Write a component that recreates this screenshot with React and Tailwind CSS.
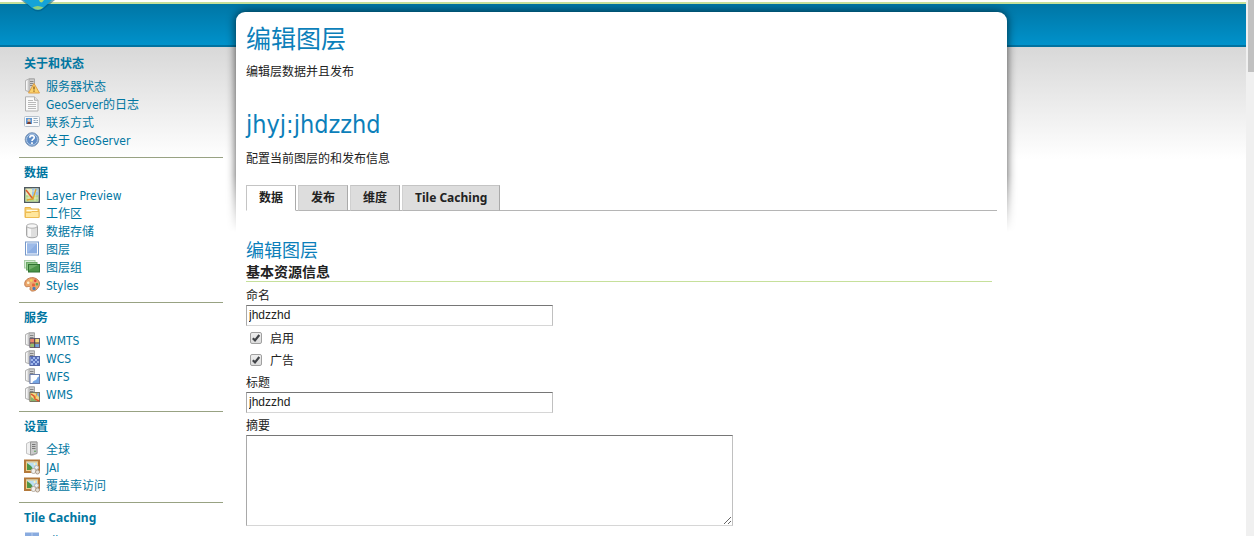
import React from "react";

const svgProps = {
  width: 16,
  height: 16,
  viewBox: "0 0 16 16",
  className: "shrink-0",
  "aria-hidden": true,
};

function Tower() {
  return (
    <>
      <path d="M1.500 2.500 5 .8h5.500v12L7 14.500 1.500 12.500z" fill="#e4e4e4" stroke="#b3b3b3" />
      <path d="M5 1h5.500v12.500L5 14z" fill="#cfcfcf" stroke="#9e9e9e" strokeWidth=".8" />
      <path d="M6 3.500h3.500M6 5.500h3.500M6 7.500h3.500" stroke="#858585" />
      <path d="M2.500 3v9" stroke="#f7f7f7" />
    </>
  );
}

const icons = {
  status: (
    <svg {...svgProps}>
      <Tower />
      <path d="M10 5.500 15.500 15h-11z" fill="#fbd26b" stroke="#e0a045" strokeLinejoin="round" />
      <path d="M10 8.500v3M10 12.500v1.300" stroke="#8a5a1a" strokeWidth="1.300" />
    </svg>
  ),
  log: (
    <svg {...svgProps}>
      <path d="M1.500.8h9L14 4.300V15H1.500z" fill="#fafafa" stroke="#b1b1b1" />
      <path d="M10.500.8v3.500H14" fill="#e4e4e4" stroke="#b1b1b1" />
      <path d="M4 4.500h5M4 6.500h8M4 8.500h8M4 10.500h8M4 12.500h8" stroke="#b9b9b9" />
    </svg>
  ),
  contact: (
    <svg {...svgProps}>
      <rect x=".5" y="2.500" width="15" height="10" rx="1" fill="#f7f9fb" stroke="#b6c1cc" />
      <rect x="2" y="4" width="6" height="6" fill="#5a96d5" />
      <circle cx="5" cy="6.300" r="1.500" fill="#efc29b" />
      <path d="M3 10c0-3 4-3 4 0z" fill="#7b3c2c" />
      <path d="M9.500 4.500h4M9.500 6.500h2M12.500 6.500h1.500M9.500 8.500h4.500" stroke="#8fa6ba" />
    </svg>
  ),
  about: (
    <svg {...svgProps}>
      <circle cx="8" cy="7.500" r="6.800" fill="#5f8cc5" stroke="#829ab8" />
      <circle cx="8" cy="7.500" r="5.500" fill="none" stroke="#b2cae6" />
      <path d="M5.800 5.800c.1-3 4.600-2.700 4.400-.1C10.100 7.200 8 7.200 8 9M8 10.300v1.700" fill="none" stroke="#fff" strokeWidth="1.700" />
    </svg>
  ),
  preview: (
    <svg {...svgProps}>
      <rect x=".7" y=".7" width="14.600" height="14.600" fill="#e4eec2" stroke="#505a60" strokeWidth="1.400" />
      <path d="M8 1.500h6.500V8L8 9z" fill="#9cc4ea" />
      <path d="M1.500 8 8 9l6-1v6.500H1.500z" fill="#b4d78c" />
      <path d="M2 4h12M2 11h12M5 2v12M11 2v12" stroke="#f5edc4" strokeWidth=".7" />
      <path d="m2 3 7 9" stroke="#dc5a2d" strokeWidth="1.500" />
      <path d="M12 2 9 12l-6 1" stroke="#e3a32b" strokeWidth="1.300" fill="none" />
    </svg>
  ),
  folder: (
    <svg {...svgProps}>
      <path d="M1 12.500v-10h5.500L7.500 4H15v8.500z" fill="#f7cf69" stroke="#e9b248" />
      <path d="M2.500 5.500h11" stroke="#fffbe9" strokeWidth="1.500" />
      <path d="M1.500 12.500v-5h5.500l1-1h7v6z" fill="#ffe69c" stroke="#edbb52" />
    </svg>
  ),
  store: (
    <svg {...svgProps}>
      <path d="M2.500 3v9.500c0 3 11 3 11 0V3" fill="#dedede" stroke="#a6a6a6" />
      <path d="M4 5v8.500h3V5.500z" fill="#f8f8f8" />
      <ellipse cx="8" cy="3" rx="5.500" ry="2.200" fill="#f7f7f7" stroke="#b2b2b2" />
    </svg>
  ),
  layer: (
    <svg {...svgProps}>
      <rect x="1.500" y="1" width="13" height="13" fill="#fff" stroke="#7598ca" />
      <rect x="3" y="2.500" width="10" height="10" fill="#8caee2" />
      <path d="M3 12.500v-10h10z" fill="#9dbbe9" />
    </svg>
  ),
  group: (
    <svg {...svgProps}>
      <rect x=".5" y="1.500" width="10.500" height="7.500" fill="#d9edd7" stroke="#a9cea6" />
      <rect x="2.500" y="3.500" width="10.500" height="7.500" fill="#8dc487" stroke="#6ea969" />
      <rect x="4.500" y="5.500" width="11" height="7.500" fill="#4b9448" stroke="#2f7331" />
      <path d="M5 6h9l-9 5z" fill="#6eae67" />
    </svg>
  ),
  palette: (
    <svg {...svgProps}>
      <path d="M1 8.500C-.5 3.500 4.500.3 9 .7c5 .5 7.500 4.500 6.200 8C13.600 13.500 8 15.500 6.300 13c-1-1.400.7-2.400-.5-3.300C4.500 8.800 2 11 1 8.500z" fill="#eca76c" stroke="#c07a4a" />
      <rect x="3" y="4.500" width="2.500" height="2.500" rx="1" fill="#fff1cd" />
      <rect x="6" y="2.200" width="2.500" height="2.500" rx="1" fill="#f4d558" />
      <rect x="10" y="2.500" width="2.500" height="2.500" rx="1" fill="#e3443c" />
      <rect x="11.700" y="6" width="2.500" height="2.500" rx="1" fill="#65a551" />
      <rect x="8" y="6.500" width="3" height="3" rx="1" fill="#e3643c" />
      <rect x="8.500" y="10" width="3" height="3" rx="1" fill="#467bbb" />
    </svg>
  ),
  wmts: (
    <svg {...svgProps}>
      <Tower />
      <rect x="6" y="6.500" width="9.500" height="9" fill="#f0c45a" stroke="#6b6070" />
      <path d="M6.500 7h4v4h-4z" fill="#ed826b" />
      <path d="M11 7h4v4h-4z" fill="#f3d678" />
      <path d="M6.500 12h4v3h-4z" fill="#93bd71" />
      <path d="M11 12h4v3h-4z" fill="#75a1d6" />
      <path d="M10.700 6.500v9M6 11h9.500" stroke="#3e3750" />
    </svg>
  ),
  wcs: (
    <svg {...svgProps}>
      <Tower />
      <rect x="6" y="6.500" width="9.500" height="9" fill="#a2b9eb" stroke="#5467a6" />
      <path d="M7 7h2v2H7zm4 0h2v2h-2zM9 9h2v2H9zm4 0h2v2h-2zm-6 2h2v2H7zm4 0h2v2h-2zm-2 2h2v2H9zm4 0h2v2h-2z" fill="#5871be" />
    </svg>
  ),
  wfs: (
    <svg {...svgProps}>
      <Tower />
      <rect x="6" y="6.500" width="9.500" height="9" fill="#fff" stroke="#6a7dab" />
      <path d="M8.500 15c0-3 4-2 4.500-4.500.2-1.100 1-1.500 2-2V15z" fill="#77a7e5" />
    </svg>
  ),
  wms: (
    <svg {...svgProps}>
      <Tower />
      <rect x="6" y="6.500" width="9.500" height="9" fill="#efd982" stroke="#79775e" />
      <path d="M11 7h4v4z" fill="#81abd6" />
      <path d="M7 11v4h6z" fill="#83b36d" />
      <path d="m7 8 3 2 1 3 4 2" stroke="#df5530" strokeWidth="1.500" fill="none" />
      <path d="m13 7-2 6" stroke="#e69a33" />
    </svg>
  ),
  server: (
    <svg {...svgProps}>
      <path d="M2.500 2.500 6 .8h7v11.500L8.500 14.500 2.500 12.500z" fill="#f0f0f0" stroke="#c4c4c4" />
      <path d="M6.500 1H13v11.500L6.500 14z" fill="#cbcbcb" stroke="#9a9a9a" />
      <path d="M8 3.500h3.500M8 5.500h3.500M8 7.500h3.500" stroke="#777" />
      <circle cx="11" cy="10.300" r=".8" fill="#459746" />
    </svg>
  ),
  picture: (
    <svg {...svgProps}>
      <rect x="1" y="1.500" width="14" height="11.500" fill="#b9def3" stroke="#b4793a" strokeWidth="2" />
      <path d="M2.500 3h11v8.500h-11z" fill="none" stroke="#f0cc83" />
      <path d="m3 4 4 3 3 4H3z" fill="#4e9546" />
      <circle cx="10.500" cy="5" r="1" fill="#fff4b8" />
      <circle cx="12.500" cy="8.500" r="2" fill="#eee" stroke="#b5b5b5" />
      <circle cx="9.500" cy="12" r="2.500" fill="#f0eeea" stroke="#b5aca0" />
      <circle cx="13.500" cy="13" r="2" fill="#e6e0d7" stroke="#ad9b89" />
    </svg>
  ),
  tiles: (
    <svg {...svgProps}>
      <path d="M1 .5h14v14H1z" fill="#89abdf" />
      <path d="M8 1v14M1 8h14" stroke="#b6cbed" />
    </svg>
  ),
};

const sections = [
  {
    title: "关于和状态",
    items: [["服务器状态", "status"], ["GeoServer的日志", "log"], ["联系方式", "contact"], ["关于 GeoServer", "about"]],
  },
  {
    title: "数据",
    items: [["Layer Preview", "preview"], ["工作区", "folder"], ["数据存储", "store"], ["图层", "layer"], ["图层组", "group"], ["Styles", "palette"]],
  },
  {
    title: "服务",
    items: [["WMTS", "wmts"], ["WCS", "wcs"], ["WFS", "wfs"], ["WMS", "wms"]],
  },
  {
    title: "设置",
    items: [["全球", "server"], ["JAI", "picture"], ["覆盖率访问", "picture"]],
  },
  { title: "Tile Caching", items: [["Tile Layers", "tiles"]] },
];

const tabs = ["数据", "发布", "维度", "Tile Caching"];

const fieldBorder = "block border border-t-[#767676] border-l-[#a9a9a9] border-r-[#c0c0c0] border-b-[#d6d6d6] bg-white outline-none";

const lightFont = "font-['DejaVu_Sans_Condensed','Noto_Sans_CJK_SC',sans-serif]";

function Logo() {
  return (
    <svg className="absolute left-5 top-0" width="36" height="12" viewBox="0 0 36 12" aria-hidden="true">
      <path d="M1 0h34L24 9q-6 5-12 0z" fill="#005b80" opacity=".55" />
      <path d="M3 0h29l-9 8q-5.500 4-11 0z" fill="#15a3d8" />
      <path d="M12.500 7.500q5-3 11 0-5.500 4.500-11 0z" fill="#8fcf7c" />
      <path d="M19 0h5l-2 2.500-2-.5z" fill="#b6dc6e" />
    </svg>
  );
}

function Sidebar() {
  return (
    <nav className="pl-[19px] pr-[13px] pt-[54px]">
      {sections.map((section, index) => (
        <section key={section.title} className={index ? "mt-2 border-t border-[#98a283] pt-1.5" : "pt-px"}>
          <h2 className="pl-[5px] text-xs font-bold leading-[18px]">{section.title}</h2>
          <ul className="mt-1 pl-[5px]">
            {section.items.map(([label, icon]) => (
              <li key={label}>
                <a href="#" className={`flex h-[18px] items-center gap-1.5 whitespace-nowrap text-xs leading-[18px] ${lightFont}`}>
                  {icons[icon]}
                  <span className="pt-0.5">{label}</span>
                </a>
              </li>
            ))}
          </ul>
        </section>
      ))}
    </nav>
  );
}

function Check({ label }) {
  return (
    <label className="flex h-[22px] items-center gap-2 pl-1 leading-[18px]">
      <span className="grid size-3 place-items-center">
        <input
          type="checkbox"
          defaultChecked
          className="peer col-start-1 row-start-1 size-3 appearance-none rounded-xs border border-[#a0a0a0] bg-linear-to-b from-[#eeeeee] to-[#dcdcdc]"
        />
        <svg className="pointer-events-none invisible col-start-1 row-start-1 peer-checked:visible" width="12" height="12" viewBox="0 0 12 12" aria-hidden="true">
          <path d="m2.800 6.200 2.200 2.200L9.300 3" fill="none" stroke="#404347" strokeWidth="2.200" />
        </svg>
      </span>
      <span className="pt-px">{label}</span>
    </label>
  );
}

function LayerForm() {
  return (
    <form className="mr-[5px]">
      <h2 className="mt-[27px] text-lg leading-6 text-[#0c7fba]">编辑图层</h2>
      <h3 className="mt-px border-b border-[#c6e09b] text-sm font-bold leading-[18px]">基本资源信息</h3>
      <label htmlFor="name" className="mt-[5px] block leading-[18px]">命名</label>
      <input id="name" defaultValue="jhdzzhd" className={`${fieldBorder} h-[21px] w-full max-w-[307px] px-0.5 pb-0.5 font-['Liberation_Sans',sans-serif]`} />
      <div className="mt-px">
        <Check label="启用" />
        <Check label="广告" />
      </div>
      <label htmlFor="title" className="mt-[3px] block leading-[18px]">标题</label>
      <input id="title" defaultValue="jhdzzhd" className={`${fieldBorder} h-[21px] w-full max-w-[307px] px-0.5 pb-0.5 font-['Liberation_Sans',sans-serif]`} />
      <label htmlFor="abstract" className="mt-1 block leading-[18px]">摘要</label>
      <textarea id="abstract" className={`${fieldBorder} h-[91px] w-full max-w-[487px] p-0.5`} />
    </form>
  );
}

function Main() {
  return (
    <main className="relative pt-3">
      <div className="pointer-events-none absolute -inset-x-3 top-1 h-[228px] overflow-hidden px-3 pt-2 mask-[linear-gradient(to_bottom,black_75%,transparent)]">
        <div className="h-[240px] rounded-t-[9px] bg-white shadow-[0_0_10px_0_rgba(0,0,0,0.7)]" />
      </div>
      <div className="relative px-[10px] pt-[10px] text-xs text-[#222]">
        <h1 className="text-[25px] leading-8 text-[#0c7fba]">编辑图层</h1>
        <p className="mt-2 leading-5">编辑层数据并且发布</p>
        <h1 className={`mt-[27px] text-[25px] leading-8 text-[#0c7fba] ${lightFont}`}>jhyj:jhdzzhd</h1>
        <p className="mt-2 leading-5">配置当前图层的和发布信息</p>
        <div role="tablist" className="mt-4 flex gap-0.5 border-b border-[#b5b5b5]">
          {tabs.map((tab, index) => (
            <button
              key={tab}
              type="button"
              role="tab"
              aria-selected={index === 0}
              className={`-mb-px h-[26px] border border-t-[#c4c4c4] border-r-[#aaa] px-3 font-bold ${
                index === 0 ? "border-b-white border-l-[#c4c4c4] bg-white" : "border-b-[#b5b5b5] border-l-[#d0d0d0] bg-[#ddd]"
              }`}
            >
              {tab}
            </button>
          ))}
        </div>
        <LayerForm />
      </div>
    </main>
  );
}

export default function App() {
  return (
    <div className="flex h-screen overflow-hidden bg-white font-['Noto_Sans','Noto_Sans_CJK_SC',sans-serif] text-[#0076a1]">
      <div className="relative min-w-0 flex-1">
        <header className="absolute inset-x-0 top-0">
          <div className="mt-0.5 h-[45px] border-b-2 border-t-2 border-b-[#0072a0] border-t-[#c6e09b] bg-linear-to-b from-[#0076a5] to-[#0092cb]" />
          <div className="h-[112px] bg-linear-to-b from-[#d8d8d8] to-white" />
          <Logo />
        </header>
        <div className="relative grid grid-cols-[236px_minmax(0,1fr)] lg:grid-cols-[236px_minmax(0,1fr)_239px]">
          <Sidebar />
          <Main />
        </div>
      </div>
      <div className="w-2 shrink-0 bg-[#f0f0f0] pl-0.5" aria-hidden="true">
        <div className="h-[72px] bg-[#c1c1c1]" />
      </div>
    </div>
  );
}
